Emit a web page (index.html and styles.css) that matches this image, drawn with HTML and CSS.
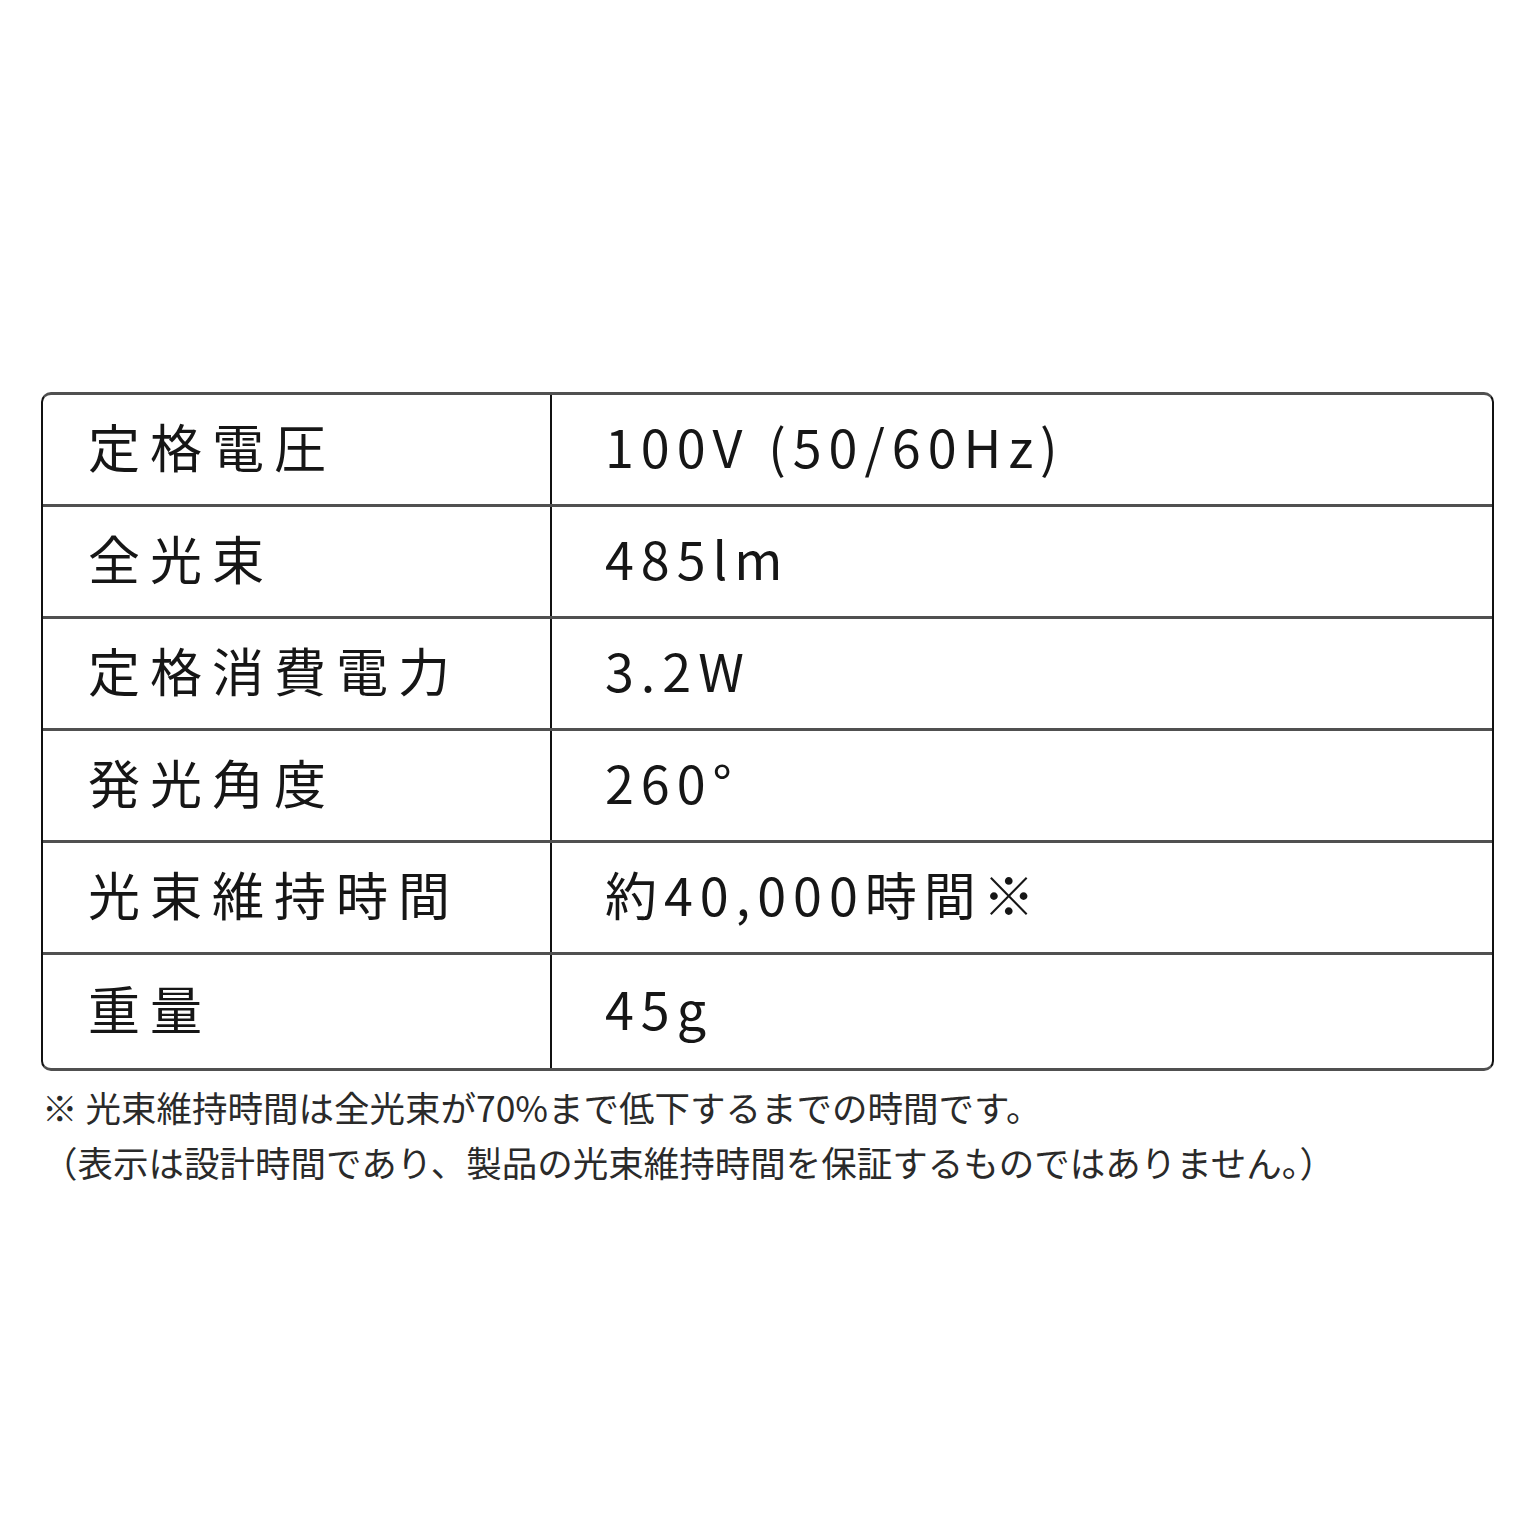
FILE: index.html
```html
<!DOCTYPE html>
<html lang="ja">
<head>
<meta charset="utf-8">
<title>仕様</title>
<link rel="stylesheet" href="styles.css">
</head>
<body>
<div class="page">
  <div class="spec">
    <div class="row"><div class="label">定格電圧</div><div class="value">100V (50/60Hz)</div></div>
    <div class="row"><div class="label">全光束</div><div class="value">485lm</div></div>
    <div class="row"><div class="label">定格消費電力</div><div class="value">3.2W</div></div>
    <div class="row"><div class="label">発光角度</div><div class="value">260°</div></div>
    <div class="row"><div class="label">光束維持時間</div><div class="value">約40,000時間※</div></div>
    <div class="row last"><div class="label">重量</div><div class="value">45g</div></div>
  </div>
  <div class="note">
    <p class="note-line">※ 光束維持時間は全光束が70%まで低下するまでの時間です。</p>
    <p class="note-line">（表示は設計時間であり、製品の光束維持時間を保証するものではありません。）</p>
  </div>
</div>
</body>
</html>
```

FILE: styles.css
```css
html, body {
  margin: 0;
  padding: 0;
  background: #ffffff;
}

body {
  font-family: "Noto Sans CJK JP", "Noto Sans", sans-serif;
  color: #161616;
}

.page {
  width: 1536px;
  height: 1536px;
  padding-top: 392px;
  box-sizing: border-box;
}

.spec {
  margin-left: 41px;
  width: 1453px;
  box-sizing: border-box;
  border-left: 2px solid #111;
  border-right: 2px solid #111;
  border-top: 3px solid #505050;
  border-bottom: 3px solid #505050;
  border-radius: 10px;
}

.row {
  display: flex;
  height: 109px;
  border-bottom: 3px solid #505050;
}

.row.last {
  height: 113px;
  border-bottom: none;
}

.label {
  width: 509px;
  flex: none;
  box-sizing: border-box;
  padding-left: 45px;
  padding-bottom: 8px;
  border-right: 2px solid #111;
  display: flex;
  align-items: center;
  font-size: 52px;
  letter-spacing: 10px;
}

.value {
  flex: 1;
  padding-left: 53px;
  padding-bottom: 8px;
  display: flex;
  align-items: center;
  font-size: 52px;
  letter-spacing: 7px;
  white-space: pre;
}

.note {
  margin-left: 42px;
  margin-top: 8px;
  color: #2a2a2a;
  font-size: 35.5px;
  line-height: 55px;
}

.note-line {
  margin: 0;
  white-space: nowrap;
}
```
